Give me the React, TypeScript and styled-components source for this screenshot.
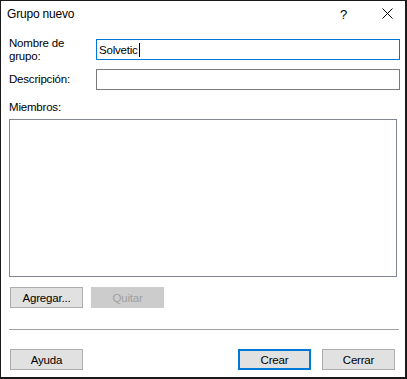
import React from "react";
import { createGlobalStyle, styled } from "styled-components";

const GlobalStyle = createGlobalStyle`
  html, body {
    margin: 0;
    padding: 0;
    background: #ffffff;
  }
  body {
    font-family: "Liberation Sans", Arial, sans-serif;
  }
`;

function CloseIcon() {
  return (
    <svg width="11" height="11" viewBox="0 0 11 11">
      <path d="M0.5 0.5 L10.5 10.5 M10.5 0.5 L0.5 10.5" stroke="#000" strokeWidth="1" fill="none" />
    </svg>
  );
}

function App() {
  return (
    <>
      <GlobalStyle />
      <Window>
        <TitleBar>
          <Title>Grupo nuevo</Title>
          <TitleButtons>
            <HelpMark>?</HelpMark>
            <CloseButton>
              <CloseIcon />
            </CloseButton>
          </TitleButtons>
        </TitleBar>
        <Body>
          <FormGrid>
            <Label>
              Nombre de
              <br />
              grupo:
            </Label>
            <TextBox $focused>
              <span>Solvetic</span>
              <Caret />
            </TextBox>
            <Label>Descripción:</Label>
            <TextBox />
          </FormGrid>
          <SectionLabel>Miembros:</SectionLabel>
          <ListBox />
          <ButtonRow>
            <Button>Agregar...</Button>
            <Button disabled>Quitar</Button>
          </ButtonRow>
          <Separator />
          <FooterRow>
            <Button>Ayuda</Button>
            <FooterRight>
              <Button $primary>Crear</Button>
              <Button>Cerrar</Button>
            </FooterRight>
          </FooterRow>
        </Body>
      </Window>
    </>
  );
}
export default App;

const Window = styled.div`
  width: 407px;
  height: 379px;
  box-sizing: border-box;
  border-style: solid;
  border-color: #1a1a1a;
  border-width: 1px 2px 2px 1px;
  background: #ffffff;
  display: flex;
  flex-direction: column;
  color: #000000;
  font-size: 11.5px;
  letter-spacing: -0.2px;
`;

const TitleBar = styled.div`
  height: 27px;
  display: flex;
  align-items: center;
  justify-content: space-between;
  padding-left: 6px;
`;

const Title = styled.div`
  font-size: 12px;
  letter-spacing: -0.2px;
  padding-bottom: 1px;
`;

const TitleButtons = styled.div`
  display: flex;
  align-items: center;
  height: 100%;
`;

const HelpMark = styled.div`
  font-size: 13px;
  width: 10px;
  margin-right: 32px;
  padding-bottom: 1px;
`;

const CloseButton = styled.div`
  display: flex;
  align-items: center;
  margin-right: 12px;
  padding-bottom: 2px;
`;

const Body = styled.div`
  display: flex;
  flex-direction: column;
  padding: 0 0 0 8px;
`;

const FormGrid = styled.div`
  display: grid;
  grid-template-columns: 87px 304px;
  grid-auto-rows: 21px;
  row-gap: 9px;
  margin-top: 11px;
  align-items: center;
`;

const Label = styled.div`
  line-height: 13px;
`;

const TextBox = styled.div<{ $focused?: boolean }>`
  box-sizing: border-box;
  height: 21px;
  border: 1px solid ${(p) => (p.$focused ? "#0078d7" : "#7a7a7a")};
  display: flex;
  align-items: center;
  padding-left: 2px;
  font-size: 11.5px;
`;

const Caret = styled.span`
  display: inline-block;
  width: 1px;
  height: 14px;
  background: #000000;
  margin-left: 1px;
`;

const SectionLabel = styled.div`
  margin-top: 11px;
  line-height: 13px;
`;

const ListBox = styled.div`
  box-sizing: border-box;
  width: 388px;
  height: 158px;
  margin-top: 5px;
  border: 1px solid #828790;
  background: #ffffff;
`;

const ButtonRow = styled.div`
  display: flex;
  gap: 8px;
  margin-top: 10px;
  padding-left: 1px;
`;

const Button = styled.button<{ $primary?: boolean }>`
  box-sizing: border-box;
  width: 73px;
  height: 21px;
  padding: 0;
  margin: 0;
  font-family: "Liberation Sans", Arial, sans-serif;
  font-size: 11.5px;
  letter-spacing: -0.2px;
  color: #000000;
  background: #e1e1e1;
  border: ${(p) => (p.$primary ? "2px solid #0078d7" : "1px solid #adadad")};
  border-radius: 0;

  &:disabled {
    background: #cccccc;
    border-color: #cccccc;
    color: #a0a0a0;
  }
`;

const Separator = styled.div`
  width: 390px;
  height: 1px;
  background: #a0a0a0;
  margin-top: 21px;
`;

const FooterRow = styled.div`
  display: flex;
  justify-content: space-between;
  margin-top: 19px;
  padding-left: 1px;
  width: 385px;
`;

const FooterRight = styled.div`
  display: flex;
  gap: 11px;
`;
